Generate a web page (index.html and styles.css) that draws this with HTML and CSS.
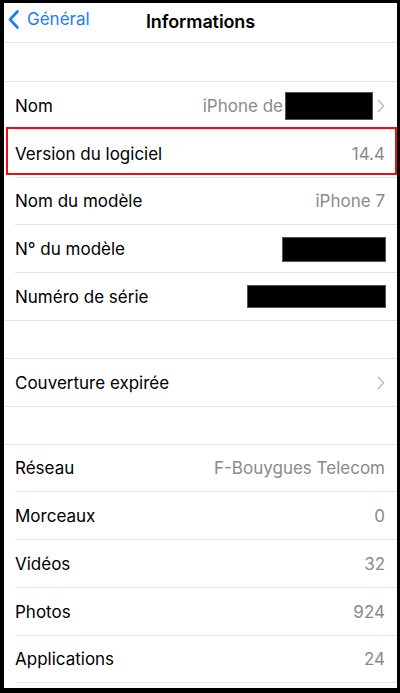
FILE: index.html
```html
<!DOCTYPE html>
<html lang="fr">
<head>
<meta charset="utf-8">
<title>Informations</title>
<link rel="stylesheet" href="styles.css">
</head>
<body>
<div class="screen">
  <header class="nav">
    <a class="back">
      <svg class="back-icon" width="11" height="19" viewBox="0 0 11 19"><polyline points="9.5,1.5 2,9.5 9.5,17.5" fill="none" stroke="#1a7cf6" stroke-width="2.6" stroke-linecap="round" stroke-linejoin="round"/></svg>
      <span>Général</span>
    </a>
    <h1 class="title">Informations</h1>
  </header>

  <section class="group group-first">
    <div class="row"><span class="label">Nom</span><span class="value">iPhone de<span class="redact redact-name"></span><svg class="chev" width="8" height="14" viewBox="0 0 8 14"><polyline points="1.5,1.5 6.5,7 1.5,12.5" fill="none" stroke="#c4c4c8" stroke-width="1.8" stroke-linecap="round" stroke-linejoin="round"/></svg></span></div>
    <div class="row row-highlight"><span class="label">Version du logiciel</span><span class="value">14.4</span></div>
    <div class="row"><span class="label">Nom du modèle</span><span class="value">iPhone 7</span></div>
    <div class="row"><span class="label">N° du modèle</span><span class="value"><span class="redact redact-model"></span></span></div>
    <div class="row row-last"><span class="label">Numéro de série</span><span class="value"><span class="redact redact-serial"></span></span></div>
  </section>

  <section class="group">
    <div class="row row-last"><span class="label">Couverture expirée</span><span class="value"><svg class="chev" width="8" height="14" viewBox="0 0 8 14"><polyline points="1.5,1.5 6.5,7 1.5,12.5" fill="none" stroke="#c4c4c8" stroke-width="1.8" stroke-linecap="round" stroke-linejoin="round"/></svg></span></div>
  </section>

  <section class="group group-open">
    <div class="row"><span class="label">Réseau</span><span class="value">F-Bouygues Telecom</span></div>
    <div class="row"><span class="label">Morceaux</span><span class="value">0</span></div>
    <div class="row"><span class="label">Vidéos</span><span class="value">32</span></div>
    <div class="row"><span class="label">Photos</span><span class="value">924</span></div>
    <div class="row"><span class="label">Applications</span><span class="value">24</span></div>
  </section>
</div>
</body>
</html>
```

FILE: styles.css
```css
html, body {
  margin: 0;
  padding: 0;
  background: #000;
}
body {
  width: 400px;
  height: 693px;
  overflow: hidden;
  font-family: Inter, "Liberation Sans", sans-serif;
}
.screen {
  margin: 3px 3px 5px 4px;
  height: 685px;
  background: #fff;
  overflow: hidden;
}
.nav {
  position: relative;
  height: 39px;
  border-bottom: 1px solid #e6e6e8;
  display: flex;
  align-items: center;
  justify-content: center;
}
.back {
  position: absolute;
  left: 4px;
  top: 6px;
  display: flex;
  align-items: center;
  gap: 8px;
  color: #1a7cf6;
  font-size: 17px;
}
.back-icon {
  display: block;
}
.title {
  margin: 0 0 3px;
  font-size: 18px;
  font-weight: 600;
  color: #000;
  letter-spacing: -0.1px;
}
.group {
  margin-top: 37px;
  border-top: 1px solid #e4e4e6;
  border-bottom: 1px solid #e4e4e6;
}
.group-first {
  margin-top: 38px;
}
.group-open {
  border-bottom: none;
}
.row {
  position: relative;
  box-sizing: border-box;
  height: 47.75px;
  padding-top: 1px;
  margin-left: 11px;
  padding-right: 12px;
  border-bottom: 1px solid #e4e4e6;
  display: flex;
  align-items: center;
  justify-content: space-between;
  font-size: 17px;
}
.row-last {
  height: 46.75px;
  border-bottom: none;
}
.label {
  color: #000;
}
.value {
  color: #8a8a8e;
  display: flex;
  align-items: center;
}
.row-highlight::after {
  content: "";
  position: absolute;
  left: -9px;
  right: 0;
  top: -3px;
  height: 44px;
  border: 2px solid #e3101c;
}
.redact {
  display: block;
  background: #000;
  border: 1px solid #555;
  box-sizing: border-box;
}
.redact-name {
  width: 88px;
  height: 28px;
  margin-left: 2px;
  margin-right: 3px;
}
.redact-model {
  width: 104px;
  height: 25px;
  margin-right: -1px;
}
.redact-serial {
  width: 139px;
  height: 23px;
  margin-right: -1px;
}
.chev {
  display: block;
  margin-left: 1px;
}
```
